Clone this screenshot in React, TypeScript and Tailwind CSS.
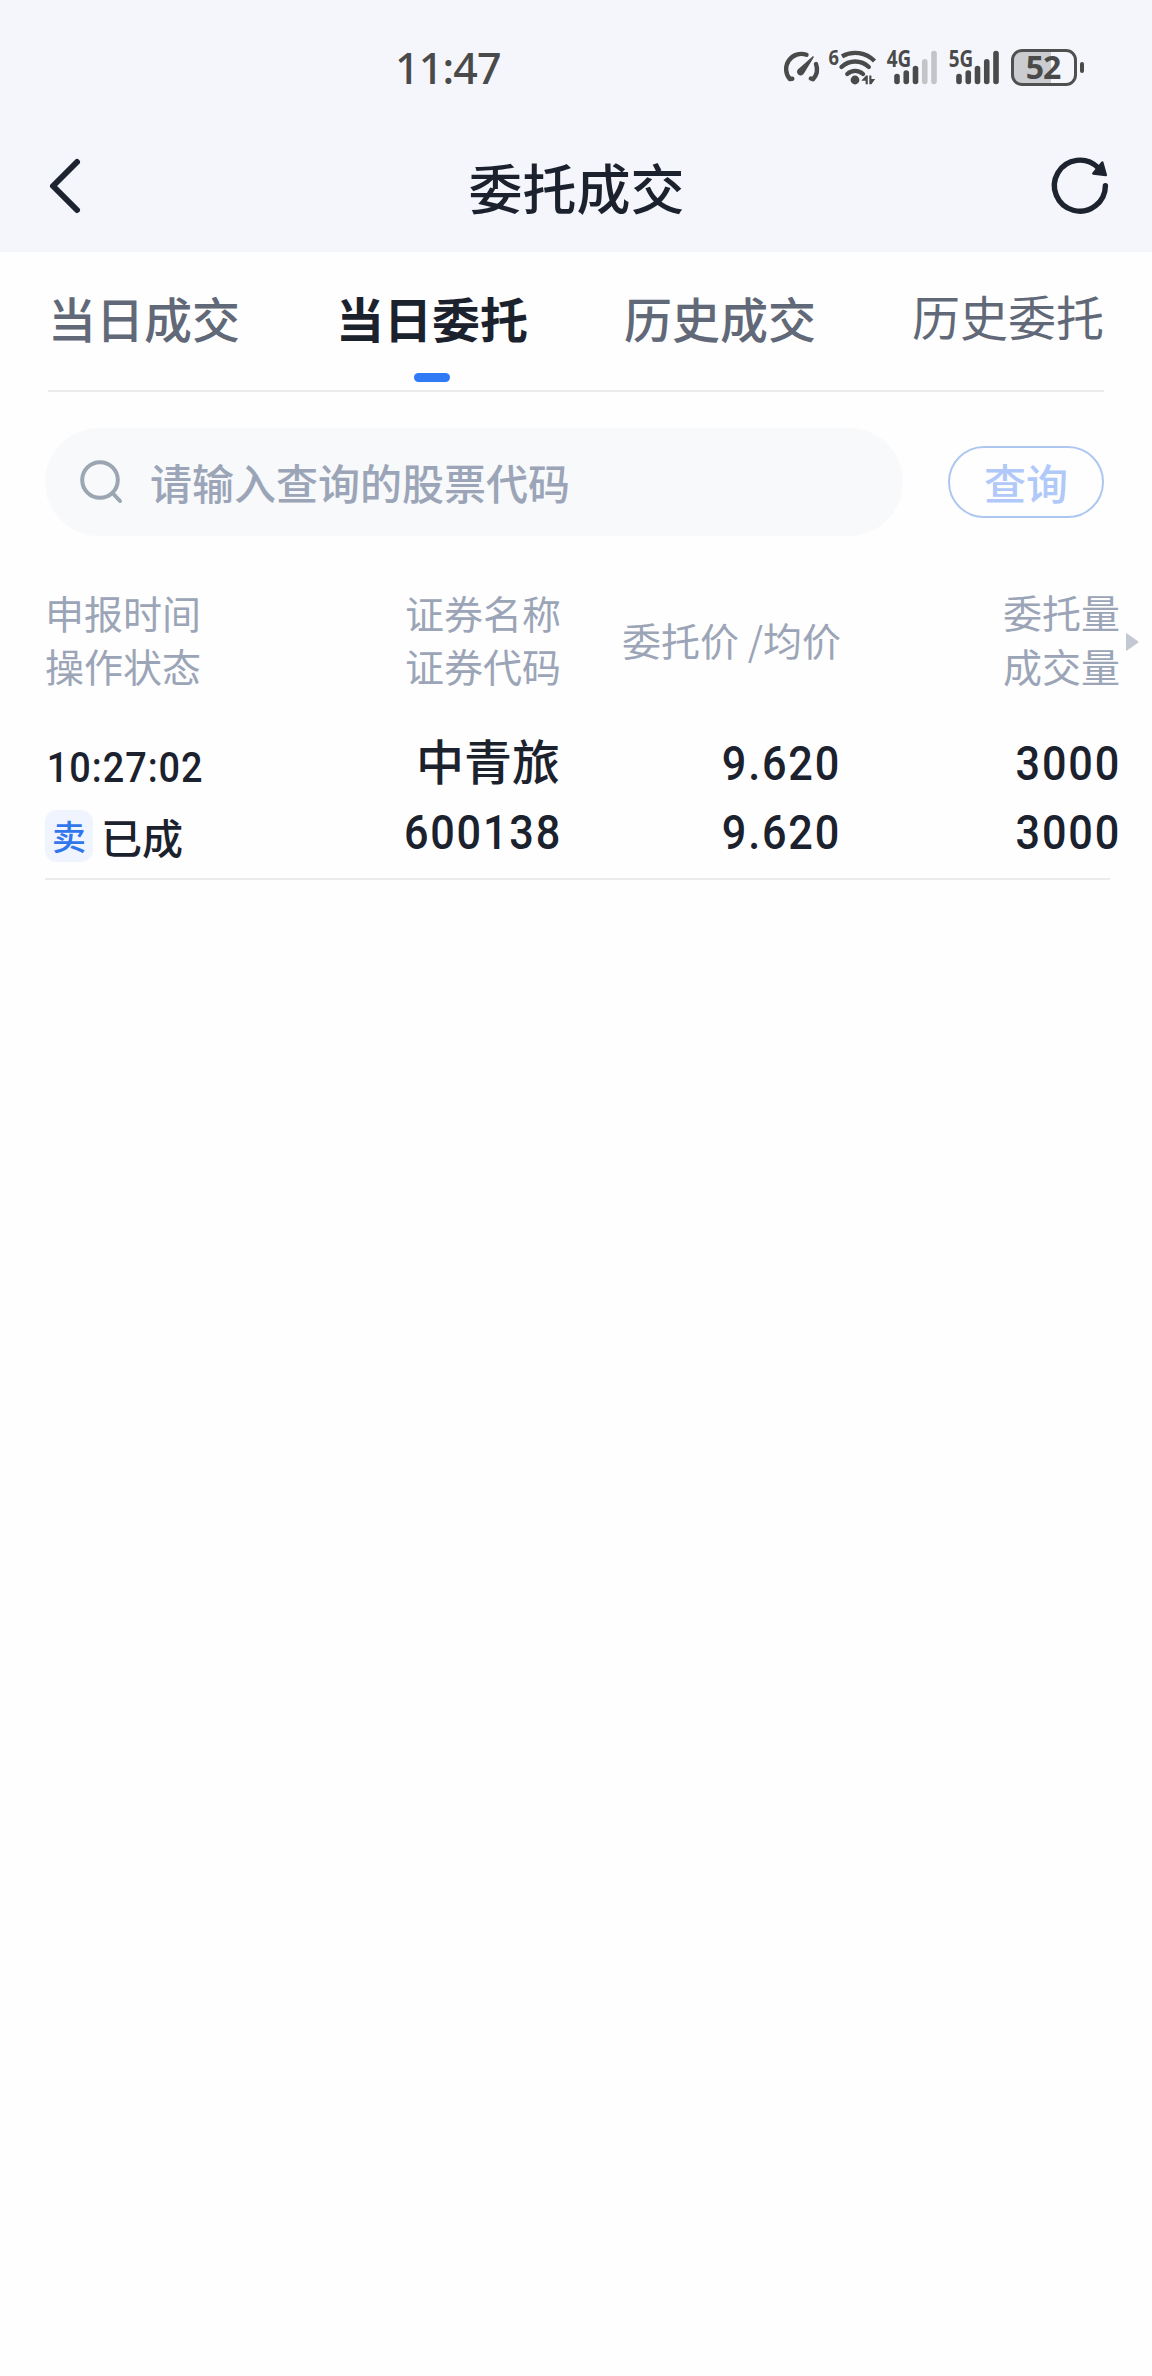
import React from "react";

const tabs = [
  { label: "当日成交", style: "font-medium text-[#616978]" },
  { label: "当日委托", style: "font-bold text-[#1b222e]", active: true },
  { label: "历史成交", style: "font-medium text-[#616978]" },
  { label: "历史委托", style: "font-normal text-[#616978] -mt-[2px]" },
];

const barTops = [73.7, 70.3, 65.7, 59, 50.7];

function SignalIcon({ x, label, active }: { x: number; label: string; active: number }) {
  return (
    <svg className="h-[56px] w-[52px] shrink-0 overflow-visible" viewBox={`${x} 36 52 56`}>
      <text x={x + 0.8} y="67.3" fontSize="22.5" fontWeight="700" textLength="24.5" lengthAdjust="spacingAndGlyphs" fill="#4a4a4a">
        {label}
      </text>
      {barTops.map((top, i) => (
        <rect
          key={top}
          x={x + 8.2 + i * 9.25}
          y={top}
          width="5.6"
          height={84.3 - top}
          rx="2.8"
          fill={i < active ? "#4a4a4a" : "#c3c4c8"}
        />
      ))}
    </svg>
  );
}

function StatusBar() {
  return (
    <div className="flex h-[120px] items-start font-['Noto_Sans',sans-serif] text-[#4a4a4a]">
      <div className="ml-[395px] mt-[38px] w-[120px] text-[43px] font-medium leading-[60px] tracking-[-0.9px]">11:47</div>
      <div className="ml-[267px] mt-[36px] flex">
        <svg className="h-[56px] w-[44px] shrink-0" viewBox="782 36 44 56" fill="none" stroke="#4a4a4a" strokeLinecap="round" strokeLinejoin="round">
          <path d="M792.3 78.8L789.8 79A15.2 15.2 0 0 1 806.5 54.8" strokeWidth="4.4" />
          <path d="M816 64A15.2 15.2 0 0 1 813 79.3L810.8 78.5" strokeWidth="4.4" />
          <path d="M813 57L799.5 69A3 3 0 1 0 803.6 72.6Z" fill="#4a4a4a" strokeWidth="1.5" />
        </svg>
        <svg className="h-[56px] w-[60px] shrink-0" viewBox="826 36 60 56" fill="none" stroke="#4a4a4a" strokeWidth="4.4" strokeLinecap="round">
          <text x="828.5" y="65.3" fontSize="22" fontWeight="700" textLength="10.5" lengthAdjust="spacingAndGlyphs" fill="#4a4a4a" stroke="none">
            6
          </text>
          <path d="M842 56.3A27 27 0 0 1 874.5 61" strokeLinecap="butt" />
          <path d="M841.5 67A19.5 19.5 0 0 1 868.8 67" />
          <path d="M847.3 74A11.5 11.5 0 0 1 863 74" />
          <circle cx="855" cy="80" r="4.4" fill="#4a4a4a" stroke="none" />
          <path d="M861.3 80.8L866 75.5H867.8V84.3H865.6V80.8ZM869.3 75.5H871.4V79H875.2L871.4 84.3H869.3Z" fill="#4a4a4a" stroke="none" />
        </svg>
        <SignalIcon x={886} label="4G" active={3} />
        <div className="w-[10px]" />
        <SignalIcon x={948} label="5G" active={5} />
        <div className="ml-[11px] mt-[13px] flex h-[37px] items-center">
          <div className="h-[37px] w-[66px] rounded-[11px] border-[3px] border-[#4f504f] bg-linear-to-r from-[#cbccd0] from-[62%] to-[#f5f6fb] to-[62%] pr-[2px] text-center text-[32px] font-bold leading-[30px] tracking-[-1px]">
            52
          </div>
          <div className="ml-[3px] h-[11px] w-[4px] rounded-full bg-[#4a4a4a]" />
        </div>
      </div>
    </div>
  );
}

function NavBar() {
  return (
    <div className="flex h-[132px] items-center justify-between pl-[45px] pr-[38px]">
      <svg className="h-[60px] w-[60px]" viewBox="45 156 60 60" fill="none" stroke="#1d2430" strokeWidth="6" strokeLinecap="round" strokeLinejoin="round">
        <path d="M77 162L53 186L77 210" />
      </svg>
      <h1 className="mt-[2px] pl-[2px] text-[54px] font-medium leading-[80px] text-[#1b222e]">委托成交</h1>
      <svg className="h-[68px] w-[68px]" viewBox="1046 152 68 68" fill="none" stroke="#1d2430" strokeWidth="5.4" strokeLinecap="round" strokeLinejoin="round">
        <path d="M1105.4 185.8A25.5 25.5 0 1 1 1098 167.7" />
        <path d="M1102.3 162.5L1105.8 175L1093.3 173.5Z" fill="#1d2430" strokeWidth="2.5" />
      </svg>
    </div>
  );
}

function Tabs() {
  return (
    <div className="mx-[48px] border-b-2 border-[#ebebeb]">
      <div className="-mx-[48px] grid h-[138px] grid-cols-4">
        {tabs.map((t) => (
          <div key={t.label} className="flex flex-col items-center pt-[30px]">
            <div className={`h-[70px] text-[48px] leading-[70px] ${t.style}`}>{t.label}</div>
            {t.active && <div className="mt-[21px] h-[9px] w-[36px] rounded-full bg-[#317af5]" />}
          </div>
        ))}
      </div>
    </div>
  );
}

function Search() {
  return (
    <div className="mt-[36px] flex items-center pl-[45px] pr-[48px]">
      <div className="flex h-[108px] w-[858px] items-center rounded-full bg-[#f7f9fb] pl-[33px] text-[#9ba5b7]">
        <svg className="h-[48px] w-[48px]" viewBox="78 458 48 48" fill="none" stroke="#9ca6b2" strokeWidth="4" strokeLinecap="round">
          <circle cx="100" cy="480" r="17.8" />
          <path d="M112.5 493L120 501" />
        </svg>
        <span className="ml-[24px] text-[42px] font-medium leading-[60px]">请输入查询的股票代码</span>
      </div>
      <button className="ml-[45px] h-[72px] w-[156px] rounded-full border-2 border-[#adc7f0] pb-px text-[42px] font-medium leading-[60px] text-[#b0c9f9]">
        查询
      </button>
    </div>
  );
}

function TableHead() {
  return (
    <div className="mt-[42px] flex h-[122px] items-center pl-[45px] text-[39px] leading-[53px] text-[#9ba5b7]">
      <div className="w-[200px]">
        <div>申报时间</div>
        <div>操作状态</div>
      </div>
      <div className="w-[316px] text-right">
        <div>证券名称</div>
        <div>证券代码</div>
      </div>
      <div className="w-[280px] whitespace-pre text-right">委托价 /均价</div>
      <div className="w-[279px] text-right">
        <div className="-mt-px">委托量</div>
        <div className="mt-px">成交量</div>
      </div>
      <svg className="ml-[6px] mt-[5px] h-[18px] w-[13px]" viewBox="0 0 13 18" fill="#c3c8d4">
        <path d="M0 1Q0 0 1 .5L12 8.2Q13 9 12 9.8L1 17.5Q0 18 0 17Z" />
      </svg>
    </div>
  );
}

function Figure({ children }: { children: string }) {
  return (
    <div className="-mr-[2px] h-[69px] origin-right scale-x-90 text-right font-['Roboto',sans-serif] text-[48px] font-medium leading-[69px] tracking-[2px]">
      {children}
    </div>
  );
}

function OrderRow() {
  return (
    <div className="ml-[45px] mr-[42px] mt-[25px] flex h-[155px] border-b-2 border-[#ebebeb] text-[#1b222e]">
      <div className="w-[200px] shrink-0">
        <div className="mt-[13px] h-[60px] origin-left scale-x-90 pl-[2px] font-['Roboto',sans-serif] text-[42px] font-medium leading-[60px] tracking-[1.1px]">
          10:27:02
        </div>
        <div className="mt-[12px] flex h-[52px] items-center">
          <div className="h-[52px] w-[48px] rounded-[12px] bg-[#eff4fe] text-center text-[34px] font-medium leading-[51px] text-[#3176ea]">卖</div>
          <div className="ml-[8px] text-[41px] font-medium leading-[52px]">已成</div>
        </div>
      </div>
      <div className="w-[315px] shrink-0 text-right">
        <div className="h-[73px] text-[48px] font-medium leading-[69px]">中青旅</div>
        <Figure>600138</Figure>
      </div>
      <div className="w-[279px] shrink-0 pt-[4px]">
        <Figure>9.620</Figure>
        <Figure>9.620</Figure>
      </div>
      <div className="w-[280px] shrink-0 pt-[4px]">
        <Figure>3000</Figure>
        <Figure>3000</Figure>
      </div>
    </div>
  );
}

export default function App() {
  return (
    <div className="min-h-[2376px] w-[1152px] overflow-hidden bg-[#fefefe] font-['Noto_Sans_CJK_SC',sans-serif]">
      <header className="bg-[#f5f6fb]">
        <StatusBar />
        <NavBar />
      </header>
      <Tabs />
      <Search />
      <TableHead />
      <OrderRow />
    </div>
  );
}
